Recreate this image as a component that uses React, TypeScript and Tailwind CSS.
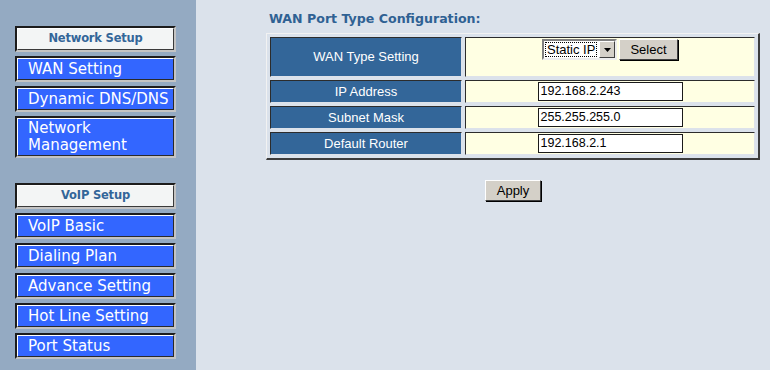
import React from 'react';

const networkItems = [['WAN Setting'], ['Dynamic DNS/DNS'], ['Network', 'Management']];
const voipItems = [['VoIP Basic'], ['Dialing Plan'], ['Advance Setting'], ['Hot Line Setting'], ['Port Status']];

function MenuHeader({ title }: { title: string }) {
  return (
    <div className="w-[161px] border-2 border-t-[#1c1c1c] border-l-[#1c1c1c] border-r-[#c4c4c4] border-b-[#c4c4c4]">
      <div className="h-[22px] border border-t-white border-l-white border-r-[#3a3a3a] border-b-[#3a3a3a] bg-[#f3f5f5] flex items-center justify-center">
        <span className="font-['DejaVu_Sans',sans-serif] font-bold text-[11.5px] text-[#336699] tracking-[-0.2px]">{title}</span>
      </div>
    </div>
  );
}

function MenuItem({ lines }: { lines: string[] }) {
  return (
    <div className="w-[161px] border-2 border-t-[#1c1c1c] border-l-[#1c1c1c] border-r-[#c4c4c4] border-b-[#c4c4c4]">
      <div
        className={`${lines.length > 1 ? 'h-[38px]' : 'h-[22px]'} border border-t-white border-l-white border-r-[#2a2a2a] border-b-[#2a2a2a] bg-[#3366ff] flex flex-col justify-center pl-[10px] font-['DejaVu_Sans',sans-serif] text-[15px] leading-[17px] text-white whitespace-nowrap`}
      >
        {lines.map(l => (
          <span key={l}>{l}</span>
        ))}
      </div>
    </div>
  );
}

function Label({ children, tall }: { children: React.ReactNode; tall?: boolean }) {
  return (
    <td
      className={`${tall ? 'h-[40px]' : 'h-[23px]'} w-[192px] bg-[#336699] border border-t-[#2c2c2c] border-l-[#2c2c2c] border-r-[#dde2ea] border-b-[#dde2ea] text-center text-white text-[13px] align-middle`}
    >
      {children}
    </td>
  );
}

function Value({ children, top }: { children: React.ReactNode; top?: boolean }) {
  return (
    <td
      className={`bg-[#ffffe3] border border-t-[#2c2c2c] border-l-[#2c2c2c] border-r-[#dde2ea] border-b-[#dde2ea] text-center ${top ? 'align-top pt-[1px]' : 'align-middle'}`}
    >
      {children}
    </td>
  );
}

function TextBox({ value }: { value: string }) {
  return (
    <div className="mx-auto w-[145px] h-[19px] border border-[#1a1a1a] bg-white text-left pl-[2px] text-[12.5px] leading-[17px] text-black">
      {value}
    </div>
  );
}

function WinButton({ label, w }: { label: string; w: string }) {
  return (
    <div
      className={`${w} h-[21px] bg-[#d4d0c8] border border-t-white border-l-white border-r-[#404040] border-b-[#404040] shadow-[1px_1px_0_#000] flex items-center justify-center text-[13px] text-black`}
    >
      {label}
    </div>
  );
}

export default function App() {
  return (
    <div className="w-[770px] h-[370px] flex bg-[#dbe2eb] font-['Liberation_Sans',Arial,sans-serif] overflow-hidden">
      {/* Sidebar */}
      <div className="w-[196px] shrink-0 bg-[#94aac2] pt-[26px] pl-[15px] flex flex-col gap-[25px]">
        <div className="flex flex-col gap-[4px]">
          <MenuHeader title="Network Setup" />
          {networkItems.map(l => (
            <MenuItem key={l.join()} lines={l} />
          ))}
        </div>
        <div className="flex flex-col gap-[4px]">
          <MenuHeader title="VoIP Setup" />
          {voipItems.map(l => (
            <MenuItem key={l.join()} lines={l} />
          ))}
        </div>
      </div>

      {/* Main */}
      <div className="flex-1 pl-[70px] pt-[11px]">
        <h1 className="pl-[3px] font-['DejaVu_Sans',sans-serif] text-[12.6px] font-bold leading-[16px] text-[#2f6193]">
          WAN Port Type Configuration:
        </h1>
        <table className="mt-[6px] w-[494px] border-separate border-spacing-[3px] border border-t-[#f2f2f2] border-l-[#f2f2f2] border-r-[#3c3c3c] border-b-[#3c3c3c] border-r-2 border-b-2">
          <tbody>
            <tr>
              <Label tall>WAN Type Setting</Label>
              <Value top>
                <div className="flex justify-center gap-[2px]">
                  <div className="w-[75px] h-[21px] bg-white border-2 border-t-[#808080] border-l-[#808080] border-r-[#eeeeee] border-b-[#eeeeee] flex items-center">
                    <div className="ml-[1px] h-[15px] border border-dotted border-black px-[1px] text-[13px] leading-[13px] text-black flex items-center">
                      Static IP
                    </div>
                    <div className="ml-auto mr-0 w-[16px] h-[17px] bg-[#d4d0c8] border border-t-white border-l-white border-r-[#404040] border-b-[#404040] flex items-center justify-center">
                      <svg width="7" height="4" viewBox="0 0 7 4">
                        <path d="M0 0h7L3.5 4z" fill="#000" />
                      </svg>
                    </div>
                  </div>
                  <WinButton label="Select" w="w-[59px]" />
                </div>
              </Value>
            </tr>
            <tr>
              <Label>IP Address</Label>
              <Value>
                <TextBox value="192.168.2.243" />
              </Value>
            </tr>
            <tr>
              <Label>Subnet Mask</Label>
              <Value>
                <TextBox value="255.255.255.0" />
              </Value>
            </tr>
            <tr>
              <Label>Default Router</Label>
              <Value>
                <TextBox value="192.168.2.1" />
              </Value>
            </tr>
          </tbody>
        </table>
        <div className="mt-[20px] w-[494px] flex justify-center">
          <WinButton label="Apply" w="w-[56px]" />
        </div>
      </div>
    </div>
  );
}
